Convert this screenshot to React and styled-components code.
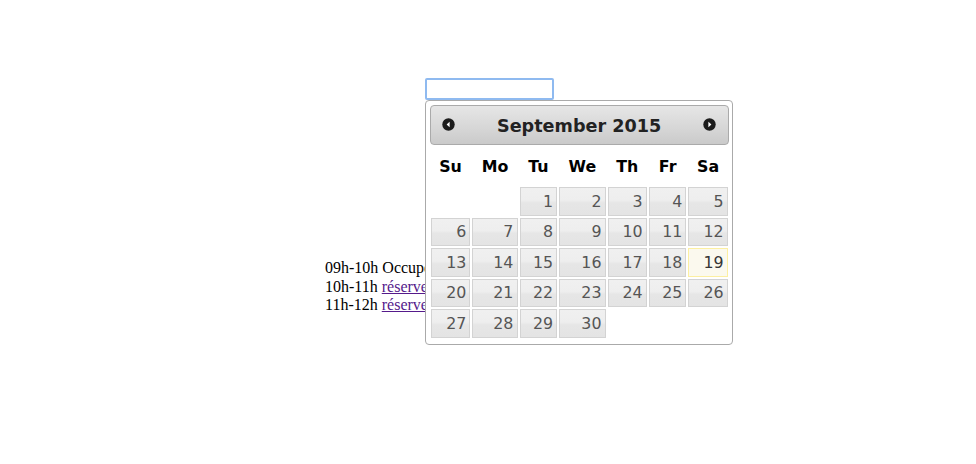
import React from 'react';
import styled, { createGlobalStyle } from 'styled-components';

const GlobalStyle = createGlobalStyle`
	html, body {
		margin: 0;
		background: #fff;
	}
	body {
		font-family: "Liberation Serif", "Times New Roman", serif;
		font-size: 16px;
	}
`;

const Page = styled.div`
	width: 976px;
	height: 464px;
	padding: 78px 0 0 325px;
	box-sizing: border-box;
`;

const Field = styled.div`
	position: relative;
	margin-left: 100px;
	width: 129px;
	z-index: 2;
`;

const DateInput = styled.input`
	display: block;
	box-sizing: border-box;
	width: 129px;
	height: 22px;
	margin: 0;
	padding: 1px 3px;
	border: 2px solid #8fbaf0;
	border-radius: 2px;
	outline: none;
	font-size: 13px;
	background: #fff;
`;

const Picker = styled.div`
	position: absolute;
	top: 22px;
	left: 0;
	width: 17em;
	padding: 0.2em;
	box-sizing: content-box;
	font-family: "DejaVu Sans", Verdana, sans-serif;
	font-size: 17.6px;
	color: #222;
	background: #fff;
	border: 1px solid #aaa;
	border-radius: 4px;
`;

const Header = styled.div`
	display: grid;
	grid-template-columns: 36px 1fr 36px;
	align-items: center;
	padding: 0.2em 0;
	border: 1px solid #aaa;
	border-radius: 4px;
	background: linear-gradient(#e6e6e6, #d6d6d6 60%, #cacaca);
	color: #222;
	font-weight: bold;
`;

const Title = styled.div`
	padding-top: 3px;
	line-height: calc(1.8em - 3px);
	text-align: center;
`;

const NavButton = styled.span`
	display: flex;
	justify-content: center;
	align-items: center;
	cursor: pointer;
`;

const Table = styled.table`
	width: 100%;
	font-size: 0.9em;
	border-collapse: collapse;
	margin: 0 0 2px;
`;

const DayHead = styled.th`
	padding: calc(0.7em + 1px) 0.3em calc(0.7em - 1px);
	text-align: center;
	font-weight: bold;
	border: 0;
	color: #000;
`;

const Cell = styled.td`
	padding: 1px;
	border: 0;
`;

const Day = styled.a`
	display: block;
	padding: 0.2em;
	line-height: 20.2px;
	text-align: right;
	text-decoration: none;
	font-weight: normal;
	border: 1px solid ${p => (p.$today ? '#fcefa1' : '#d3d3d3')};
	background: ${p =>
		p.$today ? '#fbf9ee' : 'linear-gradient(#f0f0f0, #eeeeee 45%, #e6e6e6 55%, #e4e4e4)'};
	color: ${p => (p.$today ? '#363636' : '#555')};
`;

const Schedule = styled.div`
	margin-top: 159px;
	line-height: 18.5px;
	color: #000;
	position: relative;
	z-index: 1;
`;

const Slot = styled.div`
	white-space: nowrap;
`;

const Link = styled.a`
	color: #551a8b;
	text-decoration: underline;
`;

const Arrow = ({ dir }) => (
	<svg width="13" height="13" viewBox="0 0 13 13">
		<circle cx="6.5" cy="6.5" r="6.2" fill="#1c1c1c" />
		{dir === 'left' ? (
			<polygon points="7.6,3.8 7.6,9.2 4.6,6.5" fill="#fff" />
		) : (
			<polygon points="5.4,3.8 5.4,9.2 8.4,6.5" fill="#fff" />
		)}
	</svg>
);

const days = ['Su', 'Mo', 'Tu', 'We', 'Th', 'Fr', 'Sa'];

const buildWeeks = () => {
	const cells = [null, null];
	for (let d = 1; d <= 30; d++) cells.push(d);
	while (cells.length % 7) cells.push(null);
	const weeks = [];
	for (let i = 0; i < cells.length; i += 7) weeks.push(cells.slice(i, i + 7));
	return weeks;
};

export default function App() {
	const weeks = buildWeeks();
	return (
		<>
			<GlobalStyle />
			<Page>
				<Field>
					<DateInput type="text" />
					<Picker>
						<Header>
							<NavButton title="Prev"><Arrow dir="left" /></NavButton>
							<Title>September 2015</Title>
							<NavButton title="Next"><Arrow dir="right" /></NavButton>
						</Header>
						<Table>
							<thead>
								<tr>
									{days.map(d => <DayHead key={d}>{d}</DayHead>)}
								</tr>
							</thead>
							<tbody>
								{weeks.map((week, i) => (
									<tr key={i}>
										{week.map((d, j) => (
											<Cell key={j}>
												{d && <Day href="#" $today={d === 19}>{d}</Day>}
											</Cell>
										))}
									</tr>
								))}
							</tbody>
						</Table>
					</Picker>
				</Field>
				<Schedule>
					<Slot>09h-10h Occupé</Slot>
					<Slot>10h-11h <Link href="#">réserver</Link></Slot>
					<Slot>11h-12h <Link href="#">réserver</Link></Slot>
				</Schedule>
			</Page>
		</>
	);
}
